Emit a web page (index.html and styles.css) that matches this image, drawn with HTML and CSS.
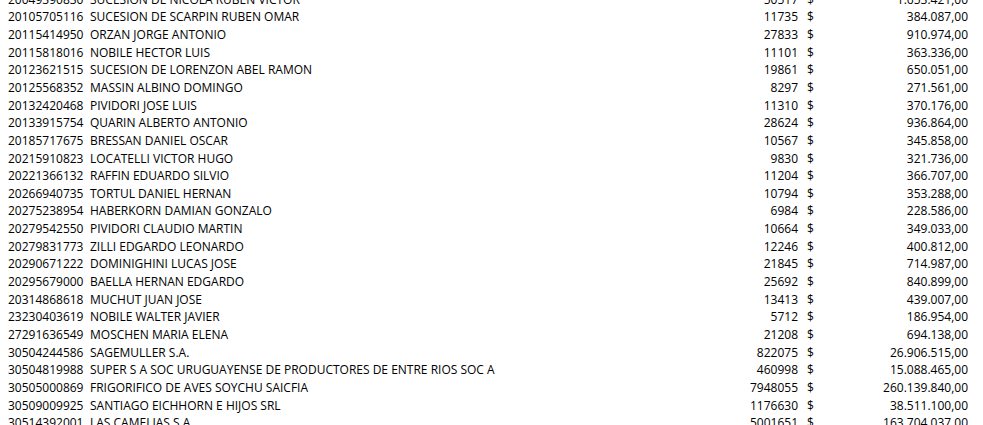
FILE: index.html
```html
<!DOCTYPE html>
<html lang="es">
<head>
<meta charset="utf-8">
<title>Listado</title>
<link rel="stylesheet" href="styles.css">
</head>
<body>
<div class="sheet">
  <div class="row"><span class="id">20049390830</span><span class="name">SUCESION DE NICOLA RUBEN VICTOR</span><span class="qty">50517</span><span class="cur">$</span><span class="amt">1.653.421,00</span></div>
  <div class="row"><span class="id">20105705116</span><span class="name">SUCESION DE SCARPIN RUBEN OMAR</span><span class="qty">11735</span><span class="cur">$</span><span class="amt">384.087,00</span></div>
  <div class="row"><span class="id">20115414950</span><span class="name">ORZAN JORGE ANTONIO</span><span class="qty">27833</span><span class="cur">$</span><span class="amt">910.974,00</span></div>
  <div class="row"><span class="id">20115818016</span><span class="name">NOBILE HECTOR LUIS</span><span class="qty">11101</span><span class="cur">$</span><span class="amt">363.336,00</span></div>
  <div class="row"><span class="id">20123621515</span><span class="name">SUCESION DE LORENZON ABEL RAMON</span><span class="qty">19861</span><span class="cur">$</span><span class="amt">650.051,00</span></div>
  <div class="row"><span class="id">20125568352</span><span class="name">MASSIN ALBINO DOMINGO</span><span class="qty">8297</span><span class="cur">$</span><span class="amt">271.561,00</span></div>
  <div class="row"><span class="id">20132420468</span><span class="name">PIVIDORI JOSE LUIS</span><span class="qty">11310</span><span class="cur">$</span><span class="amt">370.176,00</span></div>
  <div class="row"><span class="id">20133915754</span><span class="name">QUARIN ALBERTO ANTONIO</span><span class="qty">28624</span><span class="cur">$</span><span class="amt">936.864,00</span></div>
  <div class="row"><span class="id">20185717675</span><span class="name">BRESSAN DANIEL OSCAR</span><span class="qty">10567</span><span class="cur">$</span><span class="amt">345.858,00</span></div>
  <div class="row"><span class="id">20215910823</span><span class="name">LOCATELLI VICTOR HUGO</span><span class="qty">9830</span><span class="cur">$</span><span class="amt">321.736,00</span></div>
  <div class="row"><span class="id">20221366132</span><span class="name">RAFFIN EDUARDO SILVIO</span><span class="qty">11204</span><span class="cur">$</span><span class="amt">366.707,00</span></div>
  <div class="row"><span class="id">20266940735</span><span class="name">TORTUL DANIEL HERNAN</span><span class="qty">10794</span><span class="cur">$</span><span class="amt">353.288,00</span></div>
  <div class="row"><span class="id">20275238954</span><span class="name">HABERKORN DAMIAN GONZALO</span><span class="qty">6984</span><span class="cur">$</span><span class="amt">228.586,00</span></div>
  <div class="row"><span class="id">20279542550</span><span class="name">PIVIDORI CLAUDIO MARTIN</span><span class="qty">10664</span><span class="cur">$</span><span class="amt">349.033,00</span></div>
  <div class="row"><span class="id">20279831773</span><span class="name">ZILLI EDGARDO LEONARDO</span><span class="qty">12246</span><span class="cur">$</span><span class="amt">400.812,00</span></div>
  <div class="row"><span class="id">20290671222</span><span class="name">DOMINIGHINI LUCAS JOSE</span><span class="qty">21845</span><span class="cur">$</span><span class="amt">714.987,00</span></div>
  <div class="row"><span class="id">20295679000</span><span class="name">BAELLA HERNAN EDGARDO</span><span class="qty">25692</span><span class="cur">$</span><span class="amt">840.899,00</span></div>
  <div class="row"><span class="id">20314868618</span><span class="name">MUCHUT JUAN JOSE</span><span class="qty">13413</span><span class="cur">$</span><span class="amt">439.007,00</span></div>
  <div class="row"><span class="id">23230403619</span><span class="name">NOBILE WALTER JAVIER</span><span class="qty">5712</span><span class="cur">$</span><span class="amt">186.954,00</span></div>
  <div class="row"><span class="id">27291636549</span><span class="name">MOSCHEN MARIA ELENA</span><span class="qty">21208</span><span class="cur">$</span><span class="amt">694.138,00</span></div>
  <div class="row"><span class="id">30504244586</span><span class="name">SAGEMULLER S.A.</span><span class="qty">822075</span><span class="cur">$</span><span class="amt">26.906.515,00</span></div>
  <div class="row"><span class="id">30504819988</span><span class="name">SUPER S A SOC URUGUAYENSE DE PRODUCTORES DE ENTRE RIOS SOC A</span><span class="qty">460998</span><span class="cur">$</span><span class="amt">15.088.465,00</span></div>
  <div class="row"><span class="id">30505000869</span><span class="name">FRIGORIFICO DE AVES SOYCHU SAICFIA</span><span class="qty">7948055</span><span class="cur">$</span><span class="amt">260.139.840,00</span></div>
  <div class="row"><span class="id">30509009925</span><span class="name">SANTIAGO EICHHORN E HIJOS SRL</span><span class="qty">1176630</span><span class="cur">$</span><span class="amt">38.511.100,00</span></div>
  <div class="row"><span class="id">30514392001</span><span class="name">LAS CAMELIAS S A</span><span class="qty">5001651</span><span class="cur">$</span><span class="amt">163.704.037,00</span></div>
</div>
</body>
</html>
```
FILE: styles.css
```css
html, body {
  margin: 0;
  padding: 0;
  background: #ffffff;
  overflow: hidden;
}
.sheet {
  width: 983px;
  box-sizing: border-box;
  padding: 0 15px 0 8px;
  margin-top: -9.4px;
  font-family: "Open Sans", "Noto Sans", sans-serif;
  font-size: 12px;
  font-weight: 500;
  line-height: 17.66px;
  color: #000000;
}
.row {
  display: grid;
  grid-template-columns: 82px 1fr 100px 9px 41px 120px;
  white-space: nowrap;
}
.id { grid-column: 1; }
.name { grid-column: 2; }
.qty { grid-column: 3; text-align: right; }
.cur { grid-column: 5; }
.amt { grid-column: 6; text-align: right; }
```
